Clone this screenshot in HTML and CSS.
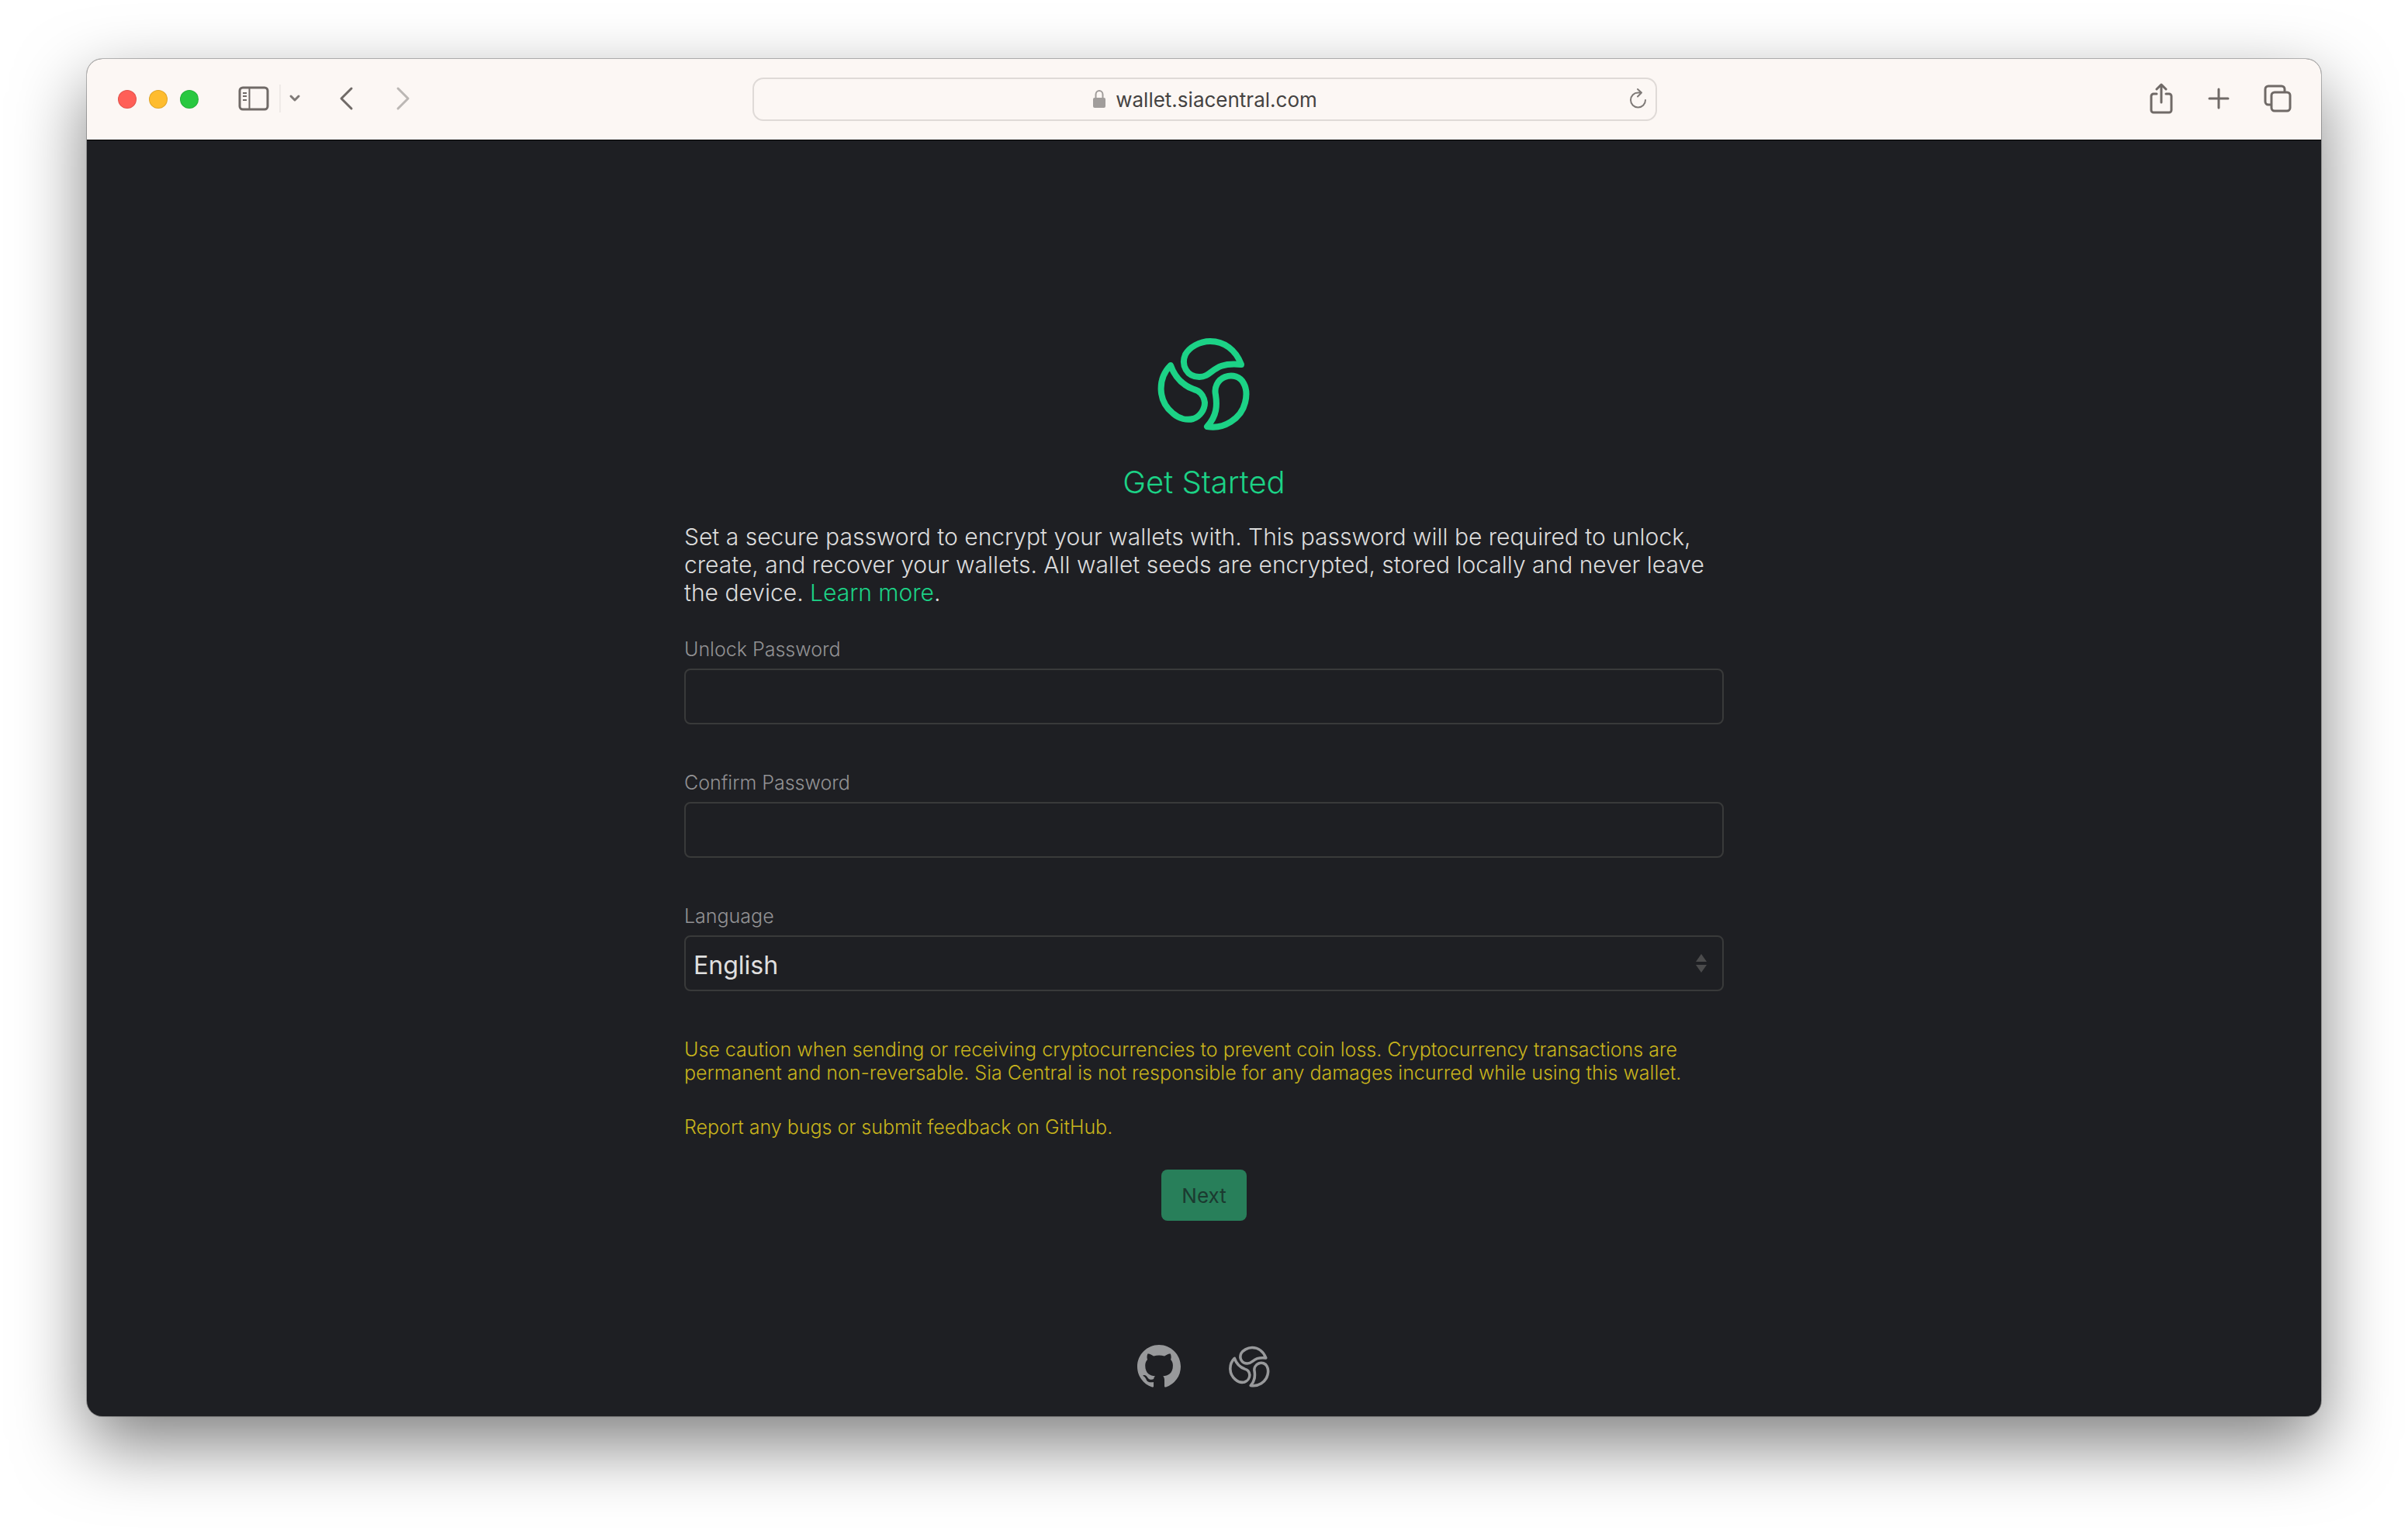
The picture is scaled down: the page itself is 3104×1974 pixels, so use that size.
FILE: index.html
```html
<!DOCTYPE html>
<html lang="en">
<head>
<meta charset="utf-8">
<title>Sia Central Wallet</title>
<link rel="stylesheet" href="styles.css">
</head>
<body>
<div class="window">
  <header class="toolbar">
    <div class="side">
      <div class="lights"><span class="light red"></span><span class="light amber"></span><span class="light green"></span></div>
      <button class="tool sidebar" aria-label="Sidebar"><svg width="40" height="32" viewBox="0 0 40 32" fill="none" stroke="currentColor" stroke-width="2"><rect x="2" y="2" width="36" height="28" rx="4" stroke-width="3"/><path d="M14.500 2v28" stroke-width="2"/><path d="M6 9h5M6 13h5M6 18h5"/></svg></button>
      <button class="tool menu" aria-label="Tab groups"><svg width="16" height="12" viewBox="0 0 16 12" fill="none" stroke="currentColor" stroke-width="3" stroke-linecap="round" stroke-linejoin="round"><path d="M3 3l5 5 5-5"/></svg></button>
      <button class="tool back" aria-label="Back"><svg width="20" height="32" viewBox="0 0 20 32" fill="none" stroke="currentColor" stroke-width="3" stroke-linecap="round" stroke-linejoin="round"><path d="M16 3L3 16l13 13"/></svg></button>
      <button class="tool forward" aria-label="Forward" disabled><svg width="20" height="32" viewBox="0 0 20 32" fill="none" stroke="currentColor" stroke-width="3" stroke-linecap="round" stroke-linejoin="round"><path d="M4 3l13 13L4 29"/></svg></button>
    </div>
    <div class="address">
      <span class="site"><svg width="18" height="26" viewBox="0 0 18 26"><rect x="1" y="11" width="16" height="13" rx="2" fill="currentColor"/><path d="M4.500 12V7a4.500 5 0 0 1 9 0v5" fill="none" stroke="currentColor" stroke-width="2"/></svg>wallet.siacentral.com</span>
      <button class="tool reload" aria-label="Reload"><svg width="24" height="28" viewBox="0 0 24 28" fill="none" stroke="currentColor" stroke-width="2" stroke-linecap="round" stroke-linejoin="round"><path d="M21 16a9.500 9.500 0 1 1-9.500-9.500h4.500M11 2l5 4.500-5 5"/></svg></button>
    </div>
    <div class="side end">
      <button class="tool" aria-label="Share"><svg width="32" height="40" viewBox="0 0 32 40" fill="none" stroke="currentColor" stroke-width="3" stroke-linecap="round" stroke-linejoin="round"><path d="M10 14H6a3 3 0 0 0-3 3v18a3 3 0 0 0 3 3h20a3 3 0 0 0 3-3V17a3 3 0 0 0-3-3h-4M16 25V3M10 8l6-6 6 6"/></svg></button>
      <button class="tool" aria-label="New tab"><svg width="28" height="28" viewBox="0 0 28 28" fill="none" stroke="currentColor" stroke-width="3" stroke-linecap="round"><path d="M14 2v24M2 14h24"/></svg></button>
      <button class="tool" aria-label="Tab overview"><svg width="36" height="36" viewBox="0 0 36 36" fill="none" stroke="currentColor" stroke-width="3" stroke-linejoin="round"><rect x="10" y="10" width="24" height="24" rx="4"/><path d="M10 26H6a4 4 0 0 1-4-4V6a4 4 0 0 1 4-4h17a4 4 0 0 1 4 4v4"/></svg></button>
    </div>
  </header>
  <main class="page">
    <form class="setup">
      <svg class="logo" viewBox="2 0 160 150" width="160" height="150" fill="none" stroke="currentColor" stroke-width="8" stroke-linejoin="round"><g id="mark"><path d="M130 50 C123 31 108 20 90 20 C76 20 63 28 58 37 C52 51 60 66 76 66 C94 66 92 46 130 50Z"/><path d="M39 51 C22 68 22 97 42 113 C50 120 60 122 68 120 C77 117 83 108 83 99 C82 91 77 84 69 82 C55 77 45 68 39 51Z"/><path d="M86 130 C107 134 130 120 135 99 C137 91 137 81 133 74 C129 66 119 62 109 66 C99 70 95 80 97 89 C99 102 99 116 86 130Z"/></g></svg>
      <h1>Get Started</h1>
      <p class="intro">Set a secure password to encrypt your wallets with. This password will be required to unlock, create, and recover your wallets. All wallet seeds are encrypted, stored locally and never leave the device. <a href="#learn">Learn more</a>.</p>
      <div class="field"><label for="unlock">Unlock Password</label><input id="unlock" type="password"></div>
      <div class="field"><label for="confirm">Confirm Password</label><input id="confirm" type="password"></div>
      <div class="field"><label for="language">Language</label>
        <div class="picker"><select id="language"><option>English</option></select><svg class="arrows" width="14" height="24" viewBox="0 0 14 24" fill="currentColor"><path d="M7 0l7 10H0zM7 24L0 14h14z"/></svg></div></div>
      <p class="warning">Use caution when sending or receiving cryptocurrencies to prevent coin loss. Cryptocurrency transactions are permanent and non-reversable. Sia Central is not responsible for any damages incurred while using this wallet.</p>
      <p class="warning">Report any bugs or submit feedback on GitHub.</p>
      <button class="next" type="submit" disabled>Next</button>
    </form>
    <footer class="links">
      <a href="#github" aria-label="GitHub"><svg width="56" height="56" viewBox="0 0 16 16" fill="currentColor"><path d="M8 0C3.580 0 0 3.580 0 8c0 3.540 2.290 6.530 5.470 7.590.4.070.55-.17.55-.38 0-.19-.01-.82-.01-1.490-2.010.37-2.530-.49-2.690-.94-.09-.23-.48-.94-.82-1.130-.28-.15-.68-.52-.01-.53.63-.01 1.080.58 1.230.82.72 1.210 1.870.87 2.330.66.07-.52.28-.87.51-1.070-1.780-.2-3.640-.89-3.640-3.950 0-.87.31-1.590.82-2.150-.08-.2-.36-1.020.08-2.120 0 0 .67-.21 2.200.82.64-.18 1.320-.27 2-.27s1.360.09 2 .27c1.530-1.040 2.200-.82 2.200-.82.44 1.100.16 1.920.08 2.120.51.56.82 1.270.82 2.150 0 3.070-1.870 3.750-3.650 3.950.29.25.54.73.54 1.480 0 1.070-.01 1.930-.01 2.200 0 .21.15.46.55.38A8.010 8.010 0 0 0 16 8c0-4.420-3.580-8-8-8z"/></svg></a>
      <a href="#sia" aria-label="Sia Central"><svg width="56" height="56" viewBox="18 12 126 126" fill="none" stroke="currentColor" stroke-width="8" stroke-linejoin="round"><use href="#mark"/></svg></a>
    </footer>
  </main>
</div>
</body>
</html>
```
FILE: styles.css
```css
* { box-sizing: border-box; }
body { margin: 0; min-height: 100vh; padding: 76px 112px 148px; display: flex; background: #fff; font-family: Inter, "Liberation Sans", sans-serif; }
.window { flex: 1; display: flex; flex-direction: column; border-radius: 20px; overflow: hidden; background: #1e1f23; box-shadow: 0 0 0 1px rgba(0,0,0,.25), 0 36px 90px rgba(0,0,0,.5); }
.toolbar { height: 105px; display: grid; grid-template-columns: 1fr 1166px 1fr; align-items: center; background: #fcf7f4; border-bottom: 1px solid #000; padding: 0 38px 0 40px; }
.side { display: flex; align-items: center; color: #706a67; }
.end { justify-content: flex-end; gap: 44px; }
.lights { display: flex; gap: 16px; }
.light { width: 24px; height: 24px; border-radius: 50%; border: 1px solid rgba(0,0,0,.12); }
.red { background: #ff5f57; }
.amber { background: #febc2e; }
.green { background: #28c840; }
.tool { padding: 0; border: 0; margin: 0 0 2px; background: none; color: inherit; display: flex; align-items: center; }
.sidebar { margin-left: 51px; }
.menu { margin-left: 13px; height: 36px; padding-left: 10px; border-left: 2px solid #efeae7; color: #7f7a77; }
.back { margin-left: 49px; }
.forward { margin-left: 52px; color: #bbb7b4; }
.address { height: 56px; display: grid; grid-template-columns: 24px 1fr 24px; align-items: center; padding: 0 10px; border: 2px solid #dfdad7; border-radius: 14px; font-size: 26px; color: #454342; }
.site { grid-column: 2; display: flex; justify-content: center; align-items: center; gap: 12px; }
.site svg { color: #a19d9b; }
.reload { color: #7f7a77; }
.page { flex: 1; display: flex; flex-direction: column; align-items: center; justify-content: space-between; padding: 239px 40px 36px; }
.setup { width: 100%; max-width: 1340px; display: flex; flex-direction: column; }
.logo { align-self: center; color: #1cd286; }
h1 { margin: 28px 0; text-align: center; font-size: 40px; line-height: 48px; font-weight: 300; color: #1cd286; }
.intro { margin: 0 0 40px; font-size: 30px; line-height: 36px; font-weight: 300; color: #dcdcdc; }
.intro a { color: #1cd286; text-decoration: none; }
.field { display: flex; flex-direction: column; gap: 10px; margin-bottom: 60px; }
label { font-size: 25px; line-height: 30px; font-weight: 300; color: #929294; }
input, select { width: 100%; height: 72px; padding: 4px 10px 0; border: 2px solid #393a3a; border-radius: 8px; background: transparent; color: #e0e0e0; font: 400 32px Inter, sans-serif; appearance: none; outline: 0; }
.picker { display: grid; align-items: center; }
.picker > * { grid-area: 1 / 1; }
.arrows { justify-self: end; margin-right: 22px; color: #4b4b4c; pointer-events: none; }
.warning { margin: 0 0 40px; font-size: 25px; line-height: 30px; font-weight: 300; color: #c8b41c; }
.next { align-self: center; height: 66px; padding: 0 26px; border: 0; border-radius: 8px; background: #287f5a; color: #1b3a30; font: 400 26px Inter, sans-serif; }
.links { display: flex; gap: 60px; color: #98999b; }
.links a { color: inherit; display: flex; }
```
